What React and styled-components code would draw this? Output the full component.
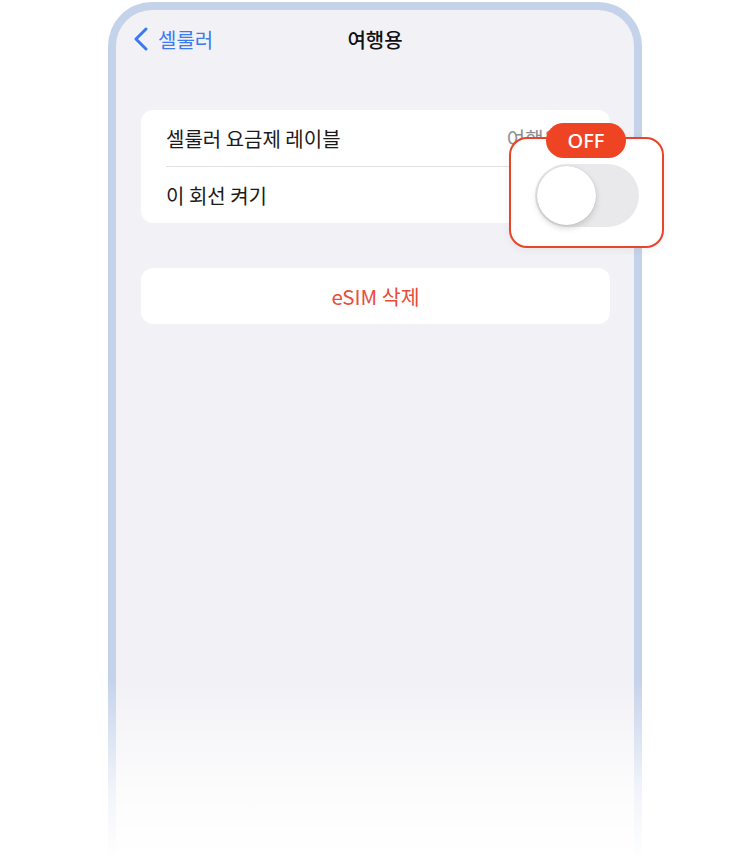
import styled, { createGlobalStyle } from 'styled-components';

const GlobalStyle = createGlobalStyle`
  html, body {
    margin: 0;
    padding: 0;
    background: #ffffff;
  }
  body {
    font-family: "Noto Sans CJK KR", "Noto Sans", sans-serif;
  }
`;

const Page = styled.div`
  position: relative;
  width: 750px;
  height: 860px;
  overflow: hidden;
  padding-top: 2px;
  box-sizing: border-box;
`;

const Frame = styled.div`
  width: 534px;
  height: 900px;
  margin: 0 auto;
  box-sizing: border-box;
  border: 8px solid #c5d3ea;
  border-bottom: none;
  border-radius: 44px 44px 0 0;
  background: #f2f2f6;
`;

const NavBar = styled.div`
  position: relative;
  display: flex;
  align-items: center;
  height: 58px;
  padding: 0 17px;
`;

const BackButton = styled.div`
  display: flex;
  align-items: center;
  gap: 9px;
  color: #3a7af0;
  font-size: 20px;
`;

const Title = styled.div`
  position: absolute;
  left: 0;
  right: 0;
  text-align: center;
  font-size: 20px;
  font-weight: 500;
  color: #111;
  pointer-events: none;
`;

const Content = styled.div`
  display: flex;
  flex-direction: column;
  gap: 45px;
  padding: 42px 24px 0 25px;
`;

const Card = styled.div`
  position: relative;
  background: #ffffff;
  border-radius: 12px;
`;

const Row = styled.div`
  display: flex;
  align-items: center;
  justify-content: ${(p) => (p.center ? 'center' : 'space-between')};
  height: 56px;
  border-bottom: ${(p) => (p.divider ? '1px solid #e1e1e4' : 'none')};
  margin-left: ${(p) => (p.center ? '0' : '25px')};
  padding-right: ${(p) => (p.center ? '0' : '48px')};
  font-size: ${(p) => (p.center ? '20.5px' : '20px')};
  color: ${(p) => (p.danger ? '#ea4c3a' : '#1a1a1a')};
`;

const Value = styled.span`
  color: #8e8e93;
  font-size: 20px;
`;

const Popup = styled.div`
  position: absolute;
  left: 368px;
  top: 27px;
  width: 155px;
  height: 111px;
  box-sizing: border-box;
  border: 2px solid #e8442a;
  border-radius: 18px;
  background: #ffffff;
  display: flex;
  align-items: center;
  justify-content: center;
  padding-top: 6px;
  box-shadow: 0 2px 10px rgba(0, 0, 0, 0.06);
`;

const Badge = styled.div`
  position: absolute;
  top: -16px;
  left: 35px;
  width: 80px;
  height: 35px;
  border-radius: 18px;
  background: #ef4423;
  color: #ffffff;
  font-family: "Noto Sans", "Liberation Sans", sans-serif;
  font-size: 20px;
  font-weight: 500;
  display: flex;
  align-items: center;
  justify-content: center;
`;

const Track = styled.div`
  position: relative;
  width: 104px;
  height: 63px;
  border-radius: 32px;
  background: #e9e9ec;
`;

const Knob = styled.div`
  position: absolute;
  left: 2px;
  top: 2px;
  width: 59px;
  height: 59px;
  border-radius: 50%;
  background: #ffffff;
  box-shadow: 0 3px 6px rgba(0, 0, 0, 0.16), 0 0 1px rgba(0, 0, 0, 0.2);
`;

const Fade = styled.div`
  position: absolute;
  left: 0;
  right: 0;
  bottom: 0;
  height: 180px;
  background: linear-gradient(to bottom, rgba(255, 255, 255, 0) 0%, rgba(255, 255, 255, 0.75) 60%, #ffffff 100%);
  pointer-events: none;
`;

const Chevron = () => (
  <svg width="16" height="24" viewBox="0 0 16 24">
    <polyline
      points="13,2 3,12 13,22"
      fill="none"
      stroke="#3a7af0"
      strokeWidth="3"
      strokeLinecap="round"
      strokeLinejoin="round"
    />
  </svg>
);

export default function App() {
  return (
    <Page>
      <GlobalStyle />
      <Frame>
        <NavBar>
          <BackButton>
            <Chevron />
            <span>셀룰러</span>
          </BackButton>
          <Title>여행용</Title>
        </NavBar>
        <Content>
          <Card>
            <Row divider>
              <span>셀룰러 요금제 레이블</span>
              <Value>여행용</Value>
            </Row>
            <Row>
              <span>이 회선 켜기</span>
            </Row>
            <Popup>
              <Badge>OFF</Badge>
              <Track>
                <Knob />
              </Track>
            </Popup>
          </Card>
          <Card>
            <Row center danger>eSIM 삭제</Row>
          </Card>
        </Content>
      </Frame>
      <Fade />
    </Page>
  );
}
